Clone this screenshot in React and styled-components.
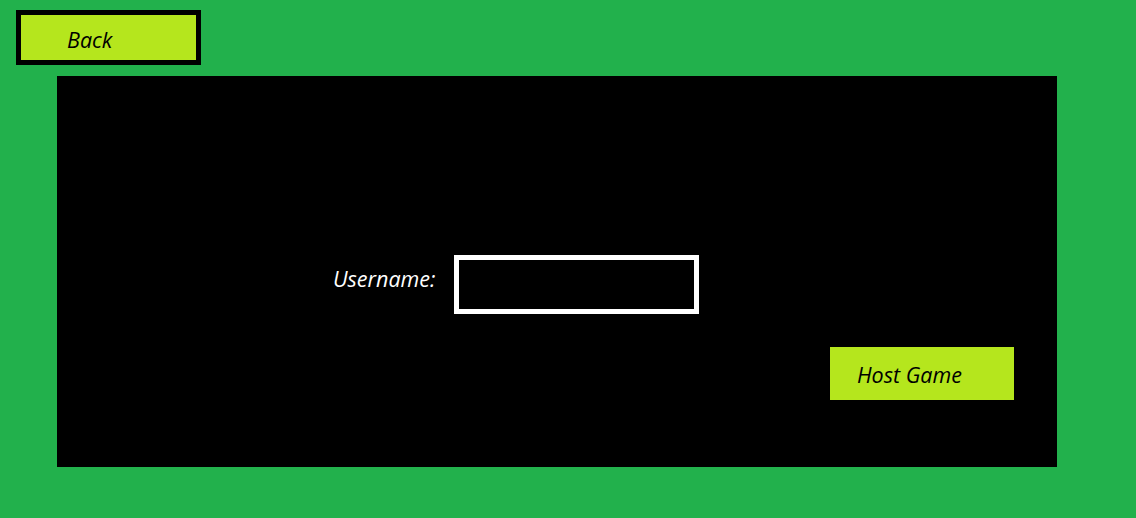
import React from 'react';
import styled, { createGlobalStyle } from 'styled-components';

const GlobalStyle = createGlobalStyle`
  html, body {
    margin: 0;
    padding: 0;
    background: #22b14c;
  }
  body {
    font-family: "Open Sans", "Liberation Sans", sans-serif;
  }
`;

const Page = styled.div`
  width: 1136px;
  height: 518px;
  padding-top: 10px;
  box-sizing: border-box;
  background: #22b14c;
  overflow: hidden;
`;

const Button = styled.button`
  display: flex;
  align-items: center;
  box-sizing: border-box;
  width: ${props => props.$width}px;
  height: ${props => props.$height}px;
  padding: ${props => props.$drop}px 0 0 ${props => props.$indent}px;
  background: #b5e61d;
  border: ${props => (props.$outlined ? '5px solid #000' : 'none')};
  font-family: "Open Sans", "Liberation Sans", sans-serif;
  font-style: italic;
  font-size: 21.5px;
  color: #000;
  cursor: pointer;
`;

const BackButton = styled(Button)`
  margin-left: 16px;
`;

const Panel = styled.main`
  display: flex;
  flex-direction: column;
  box-sizing: border-box;
  width: 1000px;
  height: 391px;
  margin: 11px 0 0 57px;
  padding-top: 179px;
  background: #000;
`;

const Field = styled.label`
  display: flex;
  align-items: center;
  gap: 19px;
  margin-left: 276px;
`;

const Label = styled.span`
  margin-bottom: 12px;
  font-style: italic;
  font-size: 21.5px;
  color: #fff;
`;

const Input = styled.input`
  box-sizing: border-box;
  width: 245px;
  height: 59px;
  background: #000;
  border: 5px solid #fff;
  color: #fff;
  font-family: inherit;
  font-size: 20px;
  outline: none;
`;

const HostButton = styled(Button)`
  align-self: flex-end;
  margin: 33px 43px 0 0;
`;

export default function App() {
  return (
    <Page>
      <GlobalStyle />
      <BackButton $outlined $width={185} $height={55} $indent={46} $drop={3}>
        Back
      </BackButton>
      <Panel>
        <Field>
          <Label>Username:</Label>
          <Input type="text" />
        </Field>
        <HostButton $width={184} $height={53} $indent={27} $drop={1}>
          Host Game
        </HostButton>
      </Panel>
    </Page>
  );
}
